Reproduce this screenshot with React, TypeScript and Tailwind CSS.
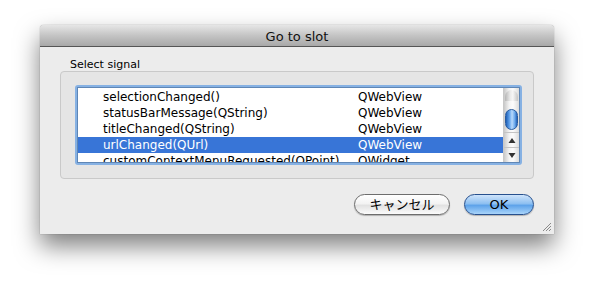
import React from "react";

const rows: [string, string, boolean][] = [
  ["selectionChanged()", "QWebView", false],
  ["statusBarMessage(QString)", "QWebView", false],
  ["titleChanged(QString)", "QWebView", false],
  ["urlChanged(QUrl)", "QWebView", true],
  ["customContextMenuRequested(QPoint)", "QWidget", false],
];

export default function App() {
  return (
    <div
      className="w-[594px] h-[289px] bg-white pt-[25px] pl-[40px] overflow-hidden"
      style={{ fontFamily: '"DejaVu Sans", "Noto Sans CJK JP", sans-serif' }}
    >
      <div className="relative w-[514px] h-[209px] bg-[#ececec] shadow-[0_12px_24px_rgba(0,0,0,0.5),0_0_1px_rgba(0,0,0,0.55)] rounded-t-[4px] flex flex-col">
        {/* title bar */}
        <div className="h-[22px] rounded-t-[4px] border-b border-[#555] bg-[linear-gradient(#e6e6e6,#c4c4c4_50%,#a8a8a8)] flex items-center justify-center">
          <span className="text-[13px] text-[#111] leading-none pt-[1px]">Go to slot</span>
        </div>
        {/* content */}
        <div className="flex flex-col px-[20px] pt-[11px]">
          <div className="text-[11px] leading-[13px] text-black ml-[10px]">Select signal</div>
          <div className="h-[108px] rounded-[4px] border border-[#c9c9c9] bg-[#e5e5e5] pl-[14px] pr-[11px] pt-[13px]">
            <div className="h-[80px] rounded-[3px] bg-[#86b1e3] p-[2px]">
              <div className="h-full bg-white border border-[#5f86b5] flex overflow-hidden">
                <div className="flex-1 flex flex-col pt-[1px] overflow-hidden">
                  {rows.map(([a, b, sel]) => (
                    <div
                      key={a}
                      className={
                        "h-[16px] shrink-0 flex items-center text-[12px] leading-none whitespace-nowrap " +
                        (sel ? "bg-[#3875d7] text-white" : "text-black")
                      }
                    >
                      <span className="w-[280px] pl-[25px]">{a}</span>
                      <span>{b}</span>
                    </div>
                  ))}
                </div>
                {/* scrollbar */}
                <div className="w-[16px] flex flex-col border-l border-[#c8c8c8] bg-[linear-gradient(90deg,#c9c9c9,#f4f4f4_35%,#fcfcfc_60%,#dcdcdc)]">
                  <div className="h-[11px] mx-[1px] mt-[2px] rounded-t-full bg-[linear-gradient(90deg,#b5b5b5,#eaeaea_40%,#f6f6f6_60%,#c4c4c4)]" />
                  <div className="flex-1 relative">
                    <div className="absolute left-[1px] right-[1px] top-[8px] h-[21px] rounded-full border border-[#2a5c9e] bg-[linear-gradient(90deg,#1f5fb5,#5ea0ea_30%,#b9dafc_55%,#6aa8ec_80%,#2462b8)]" />
                  </div>
                  <div className="h-[15px] border-t border-[#c4c4c4] flex items-center justify-center">
                    <svg width="8" height="7" viewBox="0 0 8 7">
                      <path d="M4 1 L7.5 6 L0.5 6 Z" fill="#333" />
                    </svg>
                  </div>
                  <div className="h-[15px] border-t border-[#c4c4c4] flex items-center justify-center">
                    <svg width="8" height="7" viewBox="0 0 8 7">
                      <path d="M0.5 1 L7.5 1 L4 6 Z" fill="#333" />
                    </svg>
                  </div>
                </div>
              </div>
            </div>
          </div>
          <div className="flex justify-end gap-[14px] mt-[15px]">
            <button className="w-[96px] h-[21px] rounded-full border border-[#6d6d6d] bg-[linear-gradient(#ffffff,#f3f3f3_45%,#e2e2e2_55%,#fbfbfb)] shadow-[0_1px_1px_rgba(0,0,0,0.25)] text-[13px] leading-none text-black flex items-center justify-center">
              キャンセル
            </button>
            <button className="w-[70px] h-[21px] rounded-full border border-[#27508e] bg-[linear-gradient(#cfe4fb,#8ec0f1_45%,#5ea3ea_55%,#a9d4fa)] shadow-[0_1px_1px_rgba(0,0,0,0.25)] text-[13px] leading-none text-black flex items-center justify-center">
              OK
            </button>
          </div>
        </div>
        {/* resize grip */}
        <svg className="absolute right-[2px] bottom-[2px]" width="11" height="11" viewBox="0 0 11 11">
          <path d="M10 2 L2 10 M10 5 L5 10 M10 8 L8 10" stroke="#8a8a8a" strokeWidth="1" />
        </svg>
      </div>
    </div>
  );
}
